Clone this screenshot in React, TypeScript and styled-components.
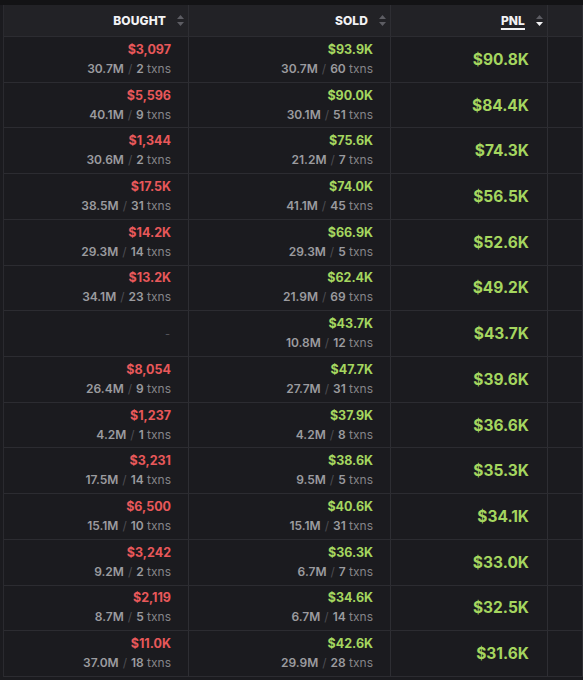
import styled, { createGlobalStyle } from 'styled-components';

const GlobalStyle = createGlobalStyle`
  html, body {
    margin: 0;
    padding: 0;
    background: #1b1b1f;
    font-family: Inter, "Noto Sans", sans-serif;
    overflow: hidden;
  }
`;

const RED = '#e8585a';
const GREEN = '#a5d65f';

type Side = { usd: string; vol: string; txns: number } | null;
type Row = { bought: Side; sold: Side; pnl: string };

const rows: Row[] = [
  { bought: { usd: '$3,097', vol: '30.7M', txns: 2 }, sold: { usd: '$93.9K', vol: '30.7M', txns: 60 }, pnl: '$90.8K' },
  { bought: { usd: '$5,596', vol: '40.1M', txns: 9 }, sold: { usd: '$90.0K', vol: '30.1M', txns: 51 }, pnl: '$84.4K' },
  { bought: { usd: '$1,344', vol: '30.6M', txns: 2 }, sold: { usd: '$75.6K', vol: '21.2M', txns: 7 }, pnl: '$74.3K' },
  { bought: { usd: '$17.5K', vol: '38.5M', txns: 31 }, sold: { usd: '$74.0K', vol: '41.1M', txns: 45 }, pnl: '$56.5K' },
  { bought: { usd: '$14.2K', vol: '29.3M', txns: 14 }, sold: { usd: '$66.9K', vol: '29.3M', txns: 5 }, pnl: '$52.6K' },
  { bought: { usd: '$13.2K', vol: '34.1M', txns: 23 }, sold: { usd: '$62.4K', vol: '21.9M', txns: 69 }, pnl: '$49.2K' },
  { bought: null, sold: { usd: '$43.7K', vol: '10.8M', txns: 12 }, pnl: '$43.7K' },
  { bought: { usd: '$8,054', vol: '26.4M', txns: 9 }, sold: { usd: '$47.7K', vol: '27.7M', txns: 31 }, pnl: '$39.6K' },
  { bought: { usd: '$1,237', vol: '4.2M', txns: 1 }, sold: { usd: '$37.9K', vol: '4.2M', txns: 8 }, pnl: '$36.6K' },
  { bought: { usd: '$3,231', vol: '17.5M', txns: 14 }, sold: { usd: '$38.6K', vol: '9.5M', txns: 5 }, pnl: '$35.3K' },
  { bought: { usd: '$6,500', vol: '15.1M', txns: 10 }, sold: { usd: '$40.6K', vol: '15.1M', txns: 31 }, pnl: '$34.1K' },
  { bought: { usd: '$3,242', vol: '9.2M', txns: 2 }, sold: { usd: '$36.3K', vol: '6.7M', txns: 7 }, pnl: '$33.0K' },
  { bought: { usd: '$2,119', vol: '8.7M', txns: 5 }, sold: { usd: '$34.6K', vol: '6.7M', txns: 14 }, pnl: '$32.5K' },
  { bought: { usd: '$11.0K', vol: '37.0M', txns: 18 }, sold: { usd: '$42.6K', vol: '29.9M', txns: 28 }, pnl: '$31.6K' },
];

const Page = styled.div`
  border-top: 5px solid #131315;
  padding-left: 3px;
`;

const Table = styled.div`
  border-left: 1px solid #2a2a2f;
`;

const Grid = styled.div<{ $header?: boolean }>`
  display: grid;
  grid-template-columns: 185px 202px 157px 1fr;
  height: ${(p) => (p.$header ? '32px' : '45.72px')};
  box-sizing: border-box;
  border-bottom: 1px solid #2c2c31;
  background: ${(p) => (p.$header ? '#222226' : '#1b1b1f')};
`;

const HeadCell = styled.div`
  display: flex;
  align-items: center;
  justify-content: flex-end;
  gap: 10px;
  padding-right: 3px;
  border-right: 1px solid #2e2e33;
`;

const HeadLabel = styled.span<{ $active?: boolean }>`
  color: #f2f2f4;
  font-size: 12px;
  font-weight: 800;
  letter-spacing: 0.1px;
  text-decoration: ${(p) => (p.$active ? 'underline' : 'none')};
  text-underline-offset: 3px;
  text-decoration-thickness: 1.5px;
`;

const Cell = styled.div`
  display: flex;
  flex-direction: column;
  align-items: flex-end;
  justify-content: center;
  gap: 2px;
  padding-right: 17px;
  border-right: 1px solid #2e2e33;
`;

const Value = styled.span<{ $color: string }>`
  color: ${(p) => p.$color};
  font-size: 12.5px;
  font-weight: 700;
  line-height: 16px;
`;

const Sub = styled.span`
  font-size: 12px;
  line-height: 17px;
  color: #858589;
`;

const SubNum = styled.span`
  color: #9b9b9f;
  font-weight: 600;
`;

const Slash = styled.span`
  color: #4d4d52;
  margin: 0 4px;
`;

const Dash = styled.span`
  color: #55555a;
  font-size: 11px;
  margin-right: 1px;
`;

const Pnl = styled.span`
  color: ${GREEN};
  font-size: 15.5px;
  font-weight: 700;
  padding-right: 1px;
`;

const SortIcon = ({ active }: { active?: boolean }) => (
  <svg width="9" height="13" viewBox="0 0 9 13">
    <path d="M4.5 1 L8 5 L1 5 Z" fill="#5d5d63" />
    <path d="M1 8 L8 8 L4.5 12 Z" fill={active ? '#f2f2f4' : '#5d5d63'} />
  </svg>
);

const SideCell = ({ side, color }: { side: Side; color: string }) => (
  <Cell>
    {side ? (
      <>
        <Value $color={color}>{side.usd}</Value>
        <Sub>
          <SubNum>{side.vol}</SubNum>
          <Slash>/</Slash>
          <SubNum>{side.txns}</SubNum> txns
        </Sub>
      </>
    ) : (
      <Dash>-</Dash>
    )}
  </Cell>
);

export default function App() {
  return (
    <Page>
      <GlobalStyle />
      <Table>
        <Grid $header>
          <HeadCell>
            <HeadLabel>BOUGHT</HeadLabel>
            <SortIcon />
          </HeadCell>
          <HeadCell>
            <HeadLabel>SOLD</HeadLabel>
            <SortIcon />
          </HeadCell>
          <HeadCell>
            <HeadLabel $active>PNL</HeadLabel>
            <SortIcon active />
          </HeadCell>
          <HeadCell />
        </Grid>
        {rows.map((r, i) => (
          <Grid key={i}>
            <SideCell side={r.bought} color={RED} />
            <SideCell side={r.sold} color={GREEN} />
            <Cell>
              <Pnl>{r.pnl}</Pnl>
            </Cell>
            <Cell />
          </Grid>
        ))}
      </Table>
    </Page>
  );
}
